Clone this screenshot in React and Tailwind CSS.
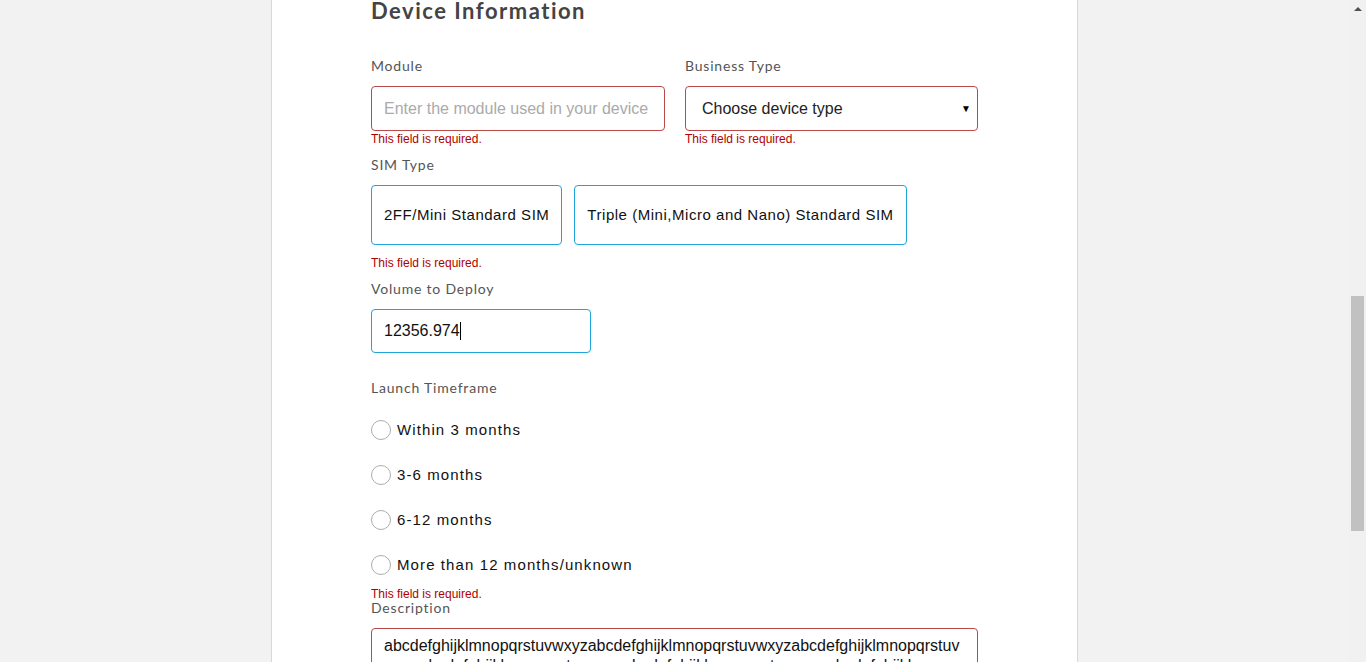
import { useState } from 'react';

const labelCls = "block text-[14px] leading-[16px] tracking-[0.8px] text-[#555]";
const errorCls = "text-[12px] leading-[14px] text-[#b00000]";
const timeframes = ['Within 3 months', '3-6 months', '6-12 months', 'More than 12 months/unknown'];

function Radio({ label }) {
  return (
    <div className="flex items-center h-5">
      <span className="w-5 h-5 rounded-full border border-[#adadad] bg-white shrink-0" />
      <span className="ml-[6px] text-[15px] tracking-[1.1px] text-[#111]">{label}</span>
    </div>
  );
}

export default function App() {
  const [sim] = useState(null);
  return (
    <div className="flex h-[662px] overflow-hidden bg-[#f2f2f2]" style={{ fontFamily: '"Liberation Sans", Arial, sans-serif' }}>
      <div className="w-[271px] shrink-0" />
      <div className="w-[807px] shrink-0 bg-white border-x border-[#d8d8d8] pl-[99px]">
        <h2 className="text-[22px] leading-[22px] font-bold tracking-[1.5px] text-[#444]" style={{ fontFamily: 'Lato, sans-serif' }}>
          Device Information
        </h2>

        <div className="grid grid-cols-[294px_293px] gap-x-[20px] mt-[36px]" style={{ fontFamily: 'Lato, sans-serif' }}>
          <label className={labelCls}>Module</label>
          <label className={labelCls}>Business Type</label>
        </div>
        <div className="grid grid-cols-[294px_293px] gap-x-[20px] mt-[12px]">
          <div>
            <div className="h-[45px] border border-[#b94a48] rounded-[4px] flex items-center px-[12px] text-[16px] text-[#aaa]">
              Enter the module used in your device
            </div>
            <p className={errorCls + " mt-[1px]"}>This field is required.</p>
          </div>
          <div>
            <div className="h-[45px] border border-[#b94a48] rounded-[4px] flex items-center justify-between pl-[16px] pr-[6px] text-[16px] text-[#222]">
              <span>Choose device type</span>
              <span className="text-[10px] text-black">▼</span>
            </div>
            <p className={errorCls + " mt-[1px]"}>This field is required.</p>
          </div>
        </div>

        <label className={labelCls + " mt-[11px]"} style={{ fontFamily: 'Lato, sans-serif' }}>SIM Type</label>
        <div className="flex gap-[12px] mt-[12px]">
          {['2FF/Mini Standard SIM', 'Triple (Mini,Micro and Nano) Standard SIM'].map((s) => (
            <button key={s} className={"h-[60px] px-[12px] border border-[#1ea5dc] rounded-[4px] bg-white text-[15px] tracking-[0.53px] text-[#111] " + (sim === s ? 'bg-[#e8f6fc]' : '')}>
              {s}
            </button>
          ))}
        </div>
        <p className={errorCls + " mt-[11px]"}>This field is required.</p>

        <label className={labelCls + " mt-[11px]"} style={{ fontFamily: 'Lato, sans-serif' }}>Volume to Deploy</label>
        <div className="w-[220px] h-[44px] mt-[12px] border border-[#1ea5dc] rounded-[4px] flex items-center px-[12px] text-[16px] text-[#111]">
          12356.974<span className="w-px h-[18px] bg-black" />
        </div>

        <label className={labelCls + " mt-[27px]"} style={{ fontFamily: 'Lato, sans-serif' }}>Launch Timeframe</label>
        <div className="flex flex-col gap-[25px] mt-[24px]">
          {timeframes.map((t) => <Radio key={t} label={t} />)}
        </div>
        <p className="text-[12px] leading-[12px] text-[#b00000] mt-[13px]">This field is required.</p>
        <label className={labelCls + " leading-[14px]"} style={{ fontFamily: 'Lato, sans-serif' }}>Description</label>

        <div className="w-[607px] h-[100px] mt-[12px] border border-[#b94a48] rounded-[4px] px-[12px] pt-[7px] text-[16px] leading-[20px] text-[#111] break-all">
          abcdefghijklmnopqrstuvwxyzabcdefghijklmnopqrstuvwxyzabcdefghijklmnopqrstuvwxyzabcdefghijklmnopqrstuvwxyzabcdefghijklmnopqrstuvwxyzabcdefghijklmnop
        </div>
      </div>
      <div className="flex-1" />
      <div className="w-[17px] shrink-0 bg-[#f1f1f1] flex flex-col items-center">
        <div className="h-[17px] flex items-center justify-center">
          <span className="w-0 h-0 border-x-[4px] border-x-transparent border-b-[4px] border-b-[#505050]" />
        </div>
        <div className="w-[13px] h-[235px] mt-[279px] bg-[#c1c1c1]" />
      </div>
    </div>
  );
}
